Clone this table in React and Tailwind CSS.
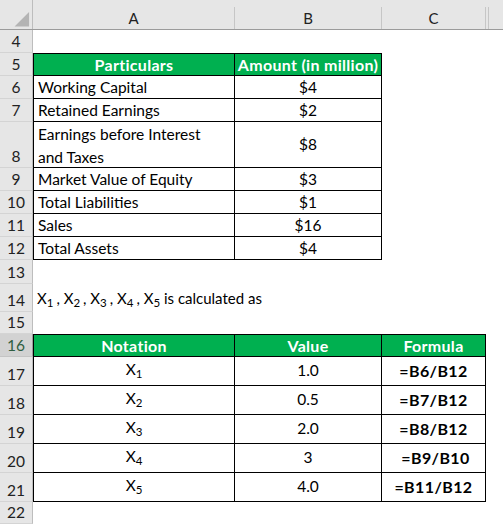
import React from "react";

const rowHead =
  "w-[33px] shrink-0 flex items-end justify-center pb-[1px] bg-[#e6e6e6] border-r border-b border-r-[#bdbdbd] border-b-[#d4d4d4] text-[#222] leading-[20px]";

const Row = ({ n, h, sel, children }) => (
  <div className={`flex ${h}`}>
    <div
      className={
        sel
          ? "w-[33px] shrink-0 flex items-end justify-center pb-[1px] bg-[#d2d2d2] border-r border-b border-r-[#9b9b9b] border-b-[#c4c4c4] text-[#2f5d40] leading-[20px]"
          : rowHead
      }
    >
      {n}
    </div>
    {children}
  </div>
);

const X = ({ i }) => (
  <span>
    X<sub className="text-[11.5px] relative top-[3px] align-baseline">{i}</sub>
  </span>
);

const Comma = () => <span className="ml-[3px]">,</span>;

const particulars = [
  ["6", "Working Capital", "$4"],
  ["7", "Retained Earnings", "$2"],
];

const particulars2 = [
  ["9", "Market Value of Equity", "$3"],
  ["10", "Total Liabilities", "$1"],
  ["11", "Sales", "$16"],
  ["12", "Total Assets", "$4"],
];

const notations = [
  ["17", 1, "1.0", "=B6/B12", ""],
  ["18", 2, "0.5", "=B7/B12", ""],
  ["19", 3, "2.0", "=B8/B12", ""],
  ["20", 4, "3", "=B9/B10", "pl-[4px]"],
  ["21", 5, "4.0", "=B11/B12", ""],
];

const head =
  "bg-[#00b050] flex items-center justify-center font-bold text-white text-[16px] tracking-[0.3px] leading-[20px]";

const DataRow = ({ n, label, amount }) => (
  <Row n={n} h="h-[23px]">
    <div className="w-[202px] shrink-0 border-l border-r border-b border-black pl-[4px] flex items-end leading-[21px]">
      {label}
    </div>
    <div className="w-[147px] shrink-0 border-r border-b border-black flex items-end justify-center leading-[21px]">
      {amount}
    </div>
    <div className="flex-1" />
  </Row>
);

export default function App() {
  return (
    <div className="w-[503px] h-[524px] overflow-hidden bg-white font-['Lato','Liberation_Sans',sans-serif] text-[15.5px] text-black">
      {/* column headers */}
      <div className="flex h-[30px] bg-[#e6e6e6] border-b border-[#9b9b9b] text-[#222] text-[15px]">
        <div className="w-[33px] shrink-0 flex items-end border-r border-[#bdbdbd]">
          <svg width="33" height="29" viewBox="0 0 33 29">
            <polygon points="15,27 30,27 30,12" fill="#b4b4b4" />
          </svg>
        </div>
        <div className="w-[202px] shrink-0 flex items-end">
          <div className="w-full h-[22px] border-r border-[#c6c6c6] flex items-center justify-center">
            A
          </div>
        </div>
        <div className="w-[147px] shrink-0 flex items-end">
          <div className="w-full h-[22px] border-r border-[#c6c6c6] flex items-center justify-center">
            B
          </div>
        </div>
        <div className="w-[104px] shrink-0 flex items-end">
          <div className="w-full h-[22px] border-r border-[#c6c6c6] flex items-center justify-center">
            C
          </div>
        </div>
        <div className="w-[3px] shrink-0 flex items-end">
          <div className="w-full h-[22px] border-r border-[#c6c6c6]" />
        </div>
        <div className="flex-1" />
      </div>

      <Row n="4" h="h-[23px]">
        <div className="flex-1" />
      </Row>

      <Row n="5" h="h-[23px]">
        <div className={`w-[202px] shrink-0 border border-black ${head}`}>
          Particulars
        </div>
        <div
          className={`w-[147px] shrink-0 border-t border-r border-b border-black ${head}`}
        >
          Amount (in million)
        </div>
        <div className="flex-1" />
      </Row>

      {particulars.map(([n, label, amount]) => (
        <DataRow key={n} n={n} label={label} amount={amount} />
      ))}

      <Row n="8" h="h-[46px]">
        <div className="w-[202px] shrink-0 border-l border-r border-b border-black pl-[4px] leading-[23px] pt-[1px]">
          Earnings before Interest
          <br />
          and Taxes
        </div>
        <div className="w-[147px] shrink-0 border-r border-b border-black flex items-center justify-center">
          $8
        </div>
        <div className="flex-1" />
      </Row>

      {particulars2.map(([n, label, amount]) => (
        <DataRow key={n} n={n} label={label} amount={amount} />
      ))}

      <Row n="13" h="h-[24px]">
        <div className="flex-1" />
      </Row>

      <Row n="14" h="h-[28px]">
        <div className="flex-1 flex items-end pl-[4px] pb-[3px] leading-[22px] text-[15px]">
          <span>
            <X i="1" />
            <Comma /> <X i="2" />
            <Comma /> <X i="3" />
            <Comma /> <X i="4" />
            <Comma /> <X i="5" /> is calculated as
          </span>
        </div>
      </Row>

      <Row n="15" h="h-[22px]">
        <div className="flex-1" />
      </Row>

      <Row n="16" h="h-[23px]" sel>
        <div className={`w-[202px] shrink-0 border border-black ${head}`}>
          Notation
        </div>
        <div
          className={`w-[147px] shrink-0 border-t border-r border-b border-black ${head}`}
        >
          Value
        </div>
        <div
          className={`w-[104px] shrink-0 border-t border-r border-b border-black ${head}`}
        >
          Formula
        </div>
        <div className="flex-1" />
      </Row>

      {notations.map(([n, i, value, formula, nudge]) => (
        <Row key={n} n={n} h="h-[29px]">
          <div className="w-[202px] shrink-0 border-l border-r border-b border-black flex items-center justify-center pb-[2px]">
            <X i={i} />
          </div>
          <div className="w-[147px] shrink-0 border-r border-b border-black flex items-center justify-center">
            {value}
          </div>
          <div
            className={`w-[104px] shrink-0 border-r border-b border-black flex items-center justify-center font-bold text-[16px] tracking-[0.4px] ${nudge}`}
          >
            {formula}
          </div>
          <div className="flex-1" />
        </Row>
      ))}

      <Row n="22" h="h-[22px]">
        <div className="flex-1" />
      </Row>
    </div>
  );
}
